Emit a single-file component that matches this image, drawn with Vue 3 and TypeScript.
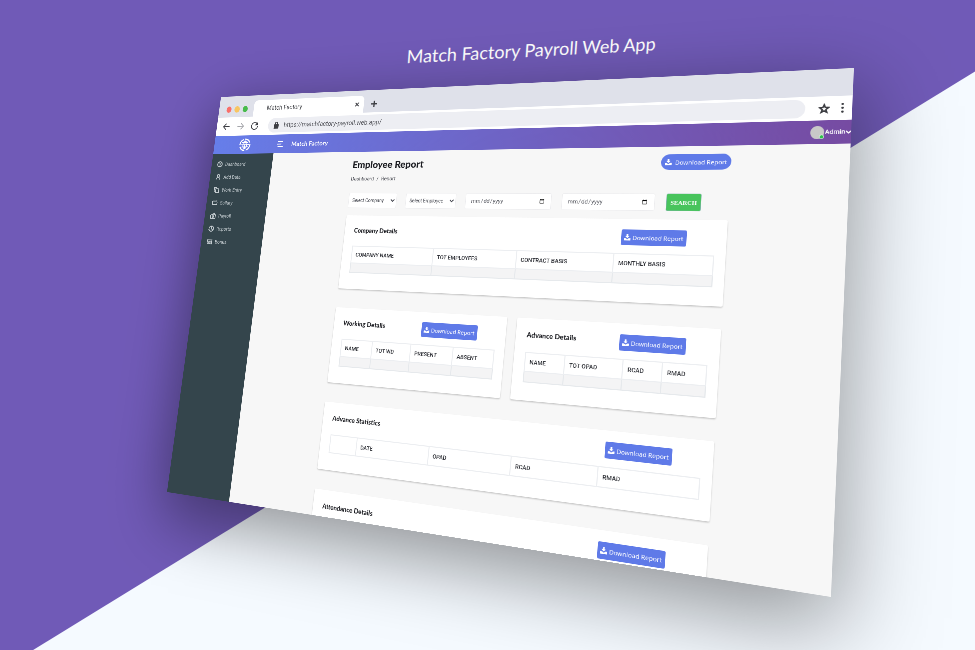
<script setup lang="ts">
import { computed, onBeforeUnmount, onMounted, ref } from 'vue'

type Point = [number, number]

interface Column {
  label: string
  share: number
}

interface Report {
  title: string
  half: boolean
  emptyRow: boolean
  columns: Column[]
}

const FLAT_WIDTH = 1300
const FLAT_HEIGHT = 900

// Corners of the tilted browser, as fractions of the viewport: TL, TR, BR, BL.
const corners: Point[] = [
  [221 / 975, 97 / 650],
  [854 / 975, 68 / 650],
  [831 / 975, 597 / 650],
  [167 / 975, 492 / 650],
]

const viewport = ref({ width: window.innerWidth, height: window.innerHeight })

function measure() {
  viewport.value = { width: window.innerWidth, height: window.innerHeight }
}

onMounted(() => window.addEventListener('resize', measure))
onBeforeUnmount(() => window.removeEventListener('resize', measure))

// Projective map from the flat browser rectangle to the four corners.
const projection = computed(() => {
  const { width, height } = viewport.value
  const [p0, p1, p2, p3] = corners.map(([x, y]): Point => [x * width, y * height])
  const dx1 = p1[0] - p2[0]
  const dx2 = p3[0] - p2[0]
  const sx = p0[0] - p1[0] + p2[0] - p3[0]
  const dy1 = p1[1] - p2[1]
  const dy2 = p3[1] - p2[1]
  const sy = p0[1] - p1[1] + p2[1] - p3[1]
  const det = dx1 * dy2 - dx2 * dy1
  const g = (sx * dy2 - dx2 * sy) / det
  const h = (dx1 * sy - sx * dy1) / det
  const a = p1[0] - p0[0] + g * p1[0]
  const b = p3[0] - p0[0] + h * p3[0]
  const d = p1[1] - p0[1] + g * p1[1]
  const e = p3[1] - p0[1] + h * p3[1]
  const w = FLAT_WIDTH
  const t = FLAT_HEIGHT
  const m = [a / w, d / w, 0, g / w, b / t, e / t, 0, h / t, 0, 0, 1, 0, p0[0], p0[1], 0, 1]
  return { transform: `matrix3d(${m.map((n) => n.toFixed(8)).join(',')})` }
})

const menu = [
  { label: 'Dashboard', icon: 'gauge' },
  { label: 'Add Data', icon: 'user' },
  { label: 'Work Entry', icon: 'copy' },
  { label: 'Sallary', icon: 'screen' },
  { label: 'Payroll', icon: 'wallet' },
  { label: 'Reports', icon: 'pie' },
  { label: 'Bonus', icon: 'note' },
]

const reports: Report[] = [
  {
    title: 'Company Details',
    half: false,
    emptyRow: true,
    columns: [
      { label: 'COMPANY NAME', share: 180 },
      { label: 'TOT EMPLOYEES', share: 172 },
      { label: 'CONTRACT BASIS', share: 185 },
      { label: 'MONTHLY BASIS', share: 175 },
    ],
  },
  {
    title: 'Working Details',
    half: true,
    emptyRow: true,
    columns: [
      { label: 'NAME', share: 69 },
      { label: 'TOT WD', share: 84 },
      { label: 'PRESENT', share: 89 },
      { label: 'ABSENT', share: 83 },
    ],
  },
  {
    title: 'Advance Details',
    half: true,
    emptyRow: true,
    columns: [
      { label: 'NAME', share: 75 },
      { label: 'TOT OPAD', share: 106 },
      { label: 'RCAD', share: 69 },
      { label: 'RMAD', share: 75 },
    ],
  },
  {
    title: 'Advance Statistics',
    half: false,
    emptyRow: false,
    columns: [
      { label: '', share: 59 },
      { label: 'DATE', share: 154 },
      { label: 'OPAD', share: 164 },
      { label: 'RCAD', share: 161 },
      { label: 'RMAD', share: 174 },
    ],
  },
  {
    title: 'Attendance Details',
    half: false,
    emptyRow: true,
    columns: [
      { label: 'NAME', share: 180 },
      { label: 'DATE', share: 172 },
      { label: 'PRESENT', share: 185 },
      { label: 'ABSENT', share: 175 },
    ],
  },
]

function columnWidth(report: Report, column: Column) {
  const total = report.columns.reduce((sum, c) => sum + c.share, 0)
  return { width: `${(column.share / total) * 100}%` }
}
</script>

<template>
  <main class="stage">
    <h1 class="headline">Match Factory Payroll Web App</h1>

    <div class="browser" :style="projection">
      <div class="strip">
        <span class="dots"><i class="dot red"></i><i class="dot amber"></i><i class="dot green"></i></span>
        <div class="tab">
          <span>Match Factory</span>
          <button class="plain" type="button" aria-label="Close tab">
            <svg width="12" height="12" viewBox="0 0 12 12"><path d="M2 2l8 8M10 2l-8 8" /></svg>
          </button>
        </div>
        <button class="plain" type="button" aria-label="New tab">
          <svg width="16" height="16" viewBox="0 0 16 16"><path stroke-width="3" d="M8 1v14M1 8h14" /></svg>
        </button>
      </div>

      <div class="toolbar">
        <button class="plain" type="button" aria-label="Back">
          <svg width="20" height="20" viewBox="0 0 20 20"><path d="M18 10H3M9 3l-7 7 7 7" /></svg>
        </button>
        <button class="plain faded" type="button" aria-label="Forward">
          <svg width="20" height="20" viewBox="0 0 20 20"><path d="M2 10h15M11 3l7 7-7 7" /></svg>
        </button>
        <button class="plain" type="button" aria-label="Reload">
          <svg width="20" height="20" viewBox="0 0 20 20"><path d="M16 5a8 8 0 1 0 2 6" /><path class="solid" d="M18 1v8h-8z" /></svg>
        </button>
        <label class="address">
          <svg width="14" height="18" viewBox="0 0 14 18"><rect class="solid" x="1" y="7" width="12" height="10" rx="1" /><path d="M4 8V5a3 3 0 0 1 6 0v3" /></svg>
          <input type="text" value="https://matchfactory-payroll.web.app/" aria-label="Address" />
        </label>
        <button class="plain" type="button" aria-label="Bookmark">
          <svg width="18" height="20" viewBox="0 0 20 20"><path stroke-width="3" d="M10 3l2 5 6 .5-4.600 4 1.400 5.500-4.800-3-4.800 3 1.400-5.500-4.600-4 6-.5z" /></svg>
        </button>
        <button class="plain" type="button" aria-label="Browser menu">
          <svg width="6" height="20" viewBox="0 0 6 20"><circle class="solid" cx="3" cy="3" r="2" /><circle class="solid" cx="3" cy="10" r="2" /><circle class="solid" cx="3" cy="17" r="2" /></svg>
        </button>
      </div>

      <header class="topbar">
        <a class="logo" href="#" aria-label="Home">
          <svg width="30" height="30" viewBox="0 0 30 30">
            <circle cx="15" cy="15" r="13" stroke-width="3" stroke-dasharray="16 4" />
            <ellipse cx="15" cy="15" rx="5" ry="9" />
            <path d="M5 15h20M7 10h16M7 20h16M15 5v20" />
          </svg>
        </a>
        <button class="plain burger" type="button" aria-label="Toggle menu">
          <svg width="16" height="16" viewBox="0 0 16 16"><path d="M2 2h13M0 8h11M2 14h13" /></svg>
        </button>
        <strong class="brand">Match Factory</strong>
        <button class="account" type="button">
          <span class="avatar"><i class="online"></i></span>
          Admin
          <svg width="8" height="8" viewBox="0 0 8 8"><path d="M0 2l4 4 4-4" /></svg>
        </button>
      </header>

      <div class="body">
        <nav class="sidebar">
          <a v-for="item in menu" :key="item.label" class="entry" href="#">
            <svg width="14" height="14" viewBox="0 0 14 14">
              <template v-if="item.icon === 'gauge'"><circle cx="7" cy="7" r="6" /><path d="M7 8l3-4M4 3l2 1M5 11h4" /></template>
              <template v-else-if="item.icon === 'user'"><circle cx="7" cy="4" r="3" /><path d="M2 13c0-7 10-7 10 0" /></template>
              <template v-else-if="item.icon === 'copy'"><path d="M5 3h5l3 3v7H5zM5 10H1V1h6v2" /></template>
              <template v-else-if="item.icon === 'screen'"><path d="M1 3h10M1 3v8h12V5M12 1v3" /></template>
              <template v-else-if="item.icon === 'wallet'"><path d="M1 5h12v8H1zM3 5l7-4 2 4" /><circle cx="7" cy="9" r="2" /></template>
              <template v-else-if="item.icon === 'pie'"><circle cx="7" cy="7" r="6" /><path d="M7 1v6l5 3" /></template>
              <template v-else><path d="M1 3h12v9H1zM1 6h3M10 6h3" /><circle cx="7" cy="8" r="2" /></template>
            </svg>
            {{ item.label }}
          </a>
        </nav>

        <section class="page">
          <div class="page-head">
            <div>
              <h2>Employee Report</h2>
              <p class="crumbs"><a href="#">Dashboard</a><span>/</span><span>Report</span></p>
            </div>
            <button class="download pill" type="button">
              <svg width="12" height="12" viewBox="0 0 16 16"><path d="M6 0h4v5h3L8 10 3 5h3zM0 10h4l4 3 4-3h4v6H0z" /></svg>
              Download Report
            </button>
          </div>

          <form class="filters" @submit.prevent>
            <select class="field" aria-label="Company"><option>Select Company</option></select>
            <select class="field" aria-label="Employee"><option>Select Employee</option></select>
            <input class="field date" type="date" aria-label="From date" />
            <input class="field date" type="date" aria-label="To date" />
            <button class="search" type="submit">SEARCH</button>
          </form>

          <div class="cards">
            <article v-for="report in reports" :key="report.title" class="card" :class="{ half: report.half }">
              <div class="card-head">
                <h3>{{ report.title }}</h3>
                <button class="download" type="button">
                  <svg width="12" height="12" viewBox="0 0 16 16"><path d="M6 0h4v5h3L8 10 3 5h3zM0 10h4l4 3 4-3h4v6H0z" /></svg>
                  Download Report
                </button>
              </div>
              <table>
                <thead>
                  <tr>
                    <th v-for="(column, i) in report.columns" :key="i" :style="columnWidth(report, column)">{{ column.label }}</th>
                  </tr>
                </thead>
                <tbody v-if="report.emptyRow">
                  <tr><td v-for="(column, i) in report.columns" :key="i"></td></tr>
                </tbody>
              </table>
            </article>
          </div>
        </section>
      </div>
    </div>
  </main>
</template>

<style>
body {
  background: #705ab7;
}
</style>

<style scoped>
* {
  box-sizing: border-box;
}

.stage {
  position: relative;
  height: 100vh;
  overflow: hidden;
  background: #705ab7;
  font-family: Roboto, "Noto Sans", sans-serif;
}

.stage::before {
  content: "";
  position: absolute;
  inset: 0;
  background: #f5faff;
  clip-path: polygon(100% 11%, 100% 100%, 3.400% 100%);
}

.headline {
  width: max-content;
  margin: 0 auto;
  padding: 38px 0 0 90px;
  color: #fff;
  font: 400 18px/28px Lato, "Noto Sans", sans-serif;
  transform: rotate(-3deg) skewX(-7deg);
}

.browser {
  position: absolute;
  top: 0;
  left: 0;
  display: flex;
  flex-direction: column;
  width: 1300px;
  height: 900px;
  transform-origin: 0 0;
  background: #f7f7f7;
  box-shadow: 0 40px 130px 10px rgba(0, 0, 0, 0.4);
}

svg {
  flex: none;
  fill: none;
  stroke: currentColor;
  stroke-width: 2;
}

.solid {
  fill: currentColor;
  stroke: none;
}

.plain {
  display: flex;
  padding: 0;
  border: 0;
  background: none;
  color: #3c3d42;
}

.faded {
  color: #a5a6ab;
}

.strip {
  display: flex;
  align-items: center;
  gap: 16px;
  height: 50px;
  padding: 12px 20px 0;
  background: #dfe1ea;
}

.dots {
  display: flex;
  gap: 8px;
  width: 56px;
}

.dot {
  width: 15px;
  height: 15px;
  border-radius: 50%;
}

.red {
  background: #f96f6a;
}

.amber {
  background: #f8c662;
}

.green {
  background: #48bb4c;
}

.tab {
  display: flex;
  align-items: center;
  justify-content: space-between;
  width: 273px;
  height: 38px;
  padding: 0 10px 0 34px;
  border-radius: 10px 10px 0 0;
  background: #fff;
  color: #3c3d42;
  font-size: 14px;
}

.toolbar {
  display: flex;
  align-items: center;
  gap: 17px;
  height: 44px;
  padding: 0 12px 0 16px;
  background: #fff;
}

.address {
  display: flex;
  flex: 1;
  align-items: center;
  gap: 12px;
  height: 34px;
  margin: 0 4px 0 8px;
  padding: 0 14px;
  border-radius: 17px;
  background: #edeef3;
  color: #3c3d42;
}

.address input {
  flex: 1;
  padding: 0;
  border: 0;
  background: none;
  color: #55565c;
  font: 14px Roboto, sans-serif;
}

.topbar {
  display: flex;
  align-items: center;
  height: 43px;
  background: linear-gradient(90deg, #667eea, #764ba2);
  color: #fff;
}

.logo {
  display: flex;
  justify-content: center;
  width: 158px;
  padding-left: 4px;
  color: #fff;
}

.burger {
  margin-left: 6px;
  color: #fff;
}

.brand {
  margin-left: 20px;
  font: 700 14px Lato, sans-serif;
}

.account {
  display: flex;
  align-items: center;
  gap: 1px;
  margin-left: auto;
  padding: 0;
  border: 0;
  background: none;
  color: #fff;
  font: 500 11px Roboto, sans-serif;
}

.avatar {
  position: relative;
  width: 22px;
  height: 24px;
  border-radius: 50%;
  background: #c9c8c8;
}

.online {
  position: absolute;
  right: 0;
  bottom: 0;
  width: 8px;
  height: 8px;
  border: 1px solid #fff;
  border-radius: 50%;
  background: #2fbf4a;
}

.body {
  display: flex;
  flex: 1;
  min-height: 0;
}

.sidebar {
  flex: none;
  width: 158px;
  padding: 9px 0 0 15px;
  background: #34454c;
}

.entry {
  display: flex;
  align-items: center;
  gap: 7px;
  height: 30px;
  color: #c3cbcf;
  font-size: 11px;
  text-decoration: none;
}

.page {
  flex: 1;
  overflow: hidden;
  padding: 13px 191px 0 197px;
}

.page-head {
  display: flex;
  align-items: flex-start;
  justify-content: space-between;
}

h2 {
  margin: 1px 0 0;
  color: #1c1d22;
  font: 900 21px/28px Lato, sans-serif;
}

.crumbs {
  display: flex;
  gap: 6px;
  margin: 8px 0 0;
  color: #3f4149;
  font-size: 11px;
  line-height: 20px;
}

.crumbs a {
  color: inherit;
  text-decoration: none;
}

.download {
  display: flex;
  align-items: center;
  justify-content: center;
  gap: 3px;
  width: 116px;
  height: 30px;
  padding: 0;
  border: 0;
  border-radius: 3px;
  background: #5f7ae8;
  color: #fff;
  font: 400 11px "Noto Sans", sans-serif;
  white-space: nowrap;
}

.download svg {
  fill: currentColor;
  stroke: none;
}

.pill {
  gap: 6px;
  width: 122px;
  margin-top: 2px;
  border-radius: 15px;
}

.filters {
  display: grid;
  grid-template-columns: 110fr 110fr 174fr 174fr 61fr;
  gap: 20px;
  height: 33px;
  margin: 20px 47px 0 0;
}

.field {
  min-width: 0;
  padding: 0 4px;
  border: 1px solid #ececee;
  border-radius: 3px;
  background: #fff;
  color: #4b4d55;
  font: 10px Roboto, sans-serif;
}

.date {
  padding: 0 10px;
  font-size: 11px;
}

.search {
  padding: 0;
  border: 1px solid #7fb5a8;
  border-radius: 3px;
  background: #48c45c;
  color: #fff;
  font: 700 11px "Liberation Serif", serif;
}

.cards {
  display: grid;
  grid-template-columns: 1fr 1fr;
  gap: 40px 20px;
  margin-top: 16px;
}

.card {
  grid-column: span 2;
  padding: 20px 19px 34px 21px;
  border-radius: 3px;
  background: #fff;
  box-shadow: 0 2px 3px rgba(0, 0, 0, 0.2);
}

.half {
  grid-column: span 1;
}

.card-head {
  display: flex;
  justify-content: space-between;
  height: 45px;
  padding-right: 49px;
}

.half .card-head {
  padding-right: 38px;
}

h3 {
  margin: 0;
  color: #1c1d22;
  font: 900 13px/24px Lato, sans-serif;
}

table {
  width: 100%;
  border-collapse: collapse;
  table-layout: fixed;
}

th {
  height: 36px;
  padding: 0 8px;
  border: 2px solid #eceef1;
  color: #2b2d33;
  font-size: 11px;
  font-weight: 500;
  text-align: left;
  white-space: nowrap;
}

td {
  height: 20px;
  padding: 0;
  border: 2px solid #e6e9ec;
  background: #f4f4f5;
}
</style>
